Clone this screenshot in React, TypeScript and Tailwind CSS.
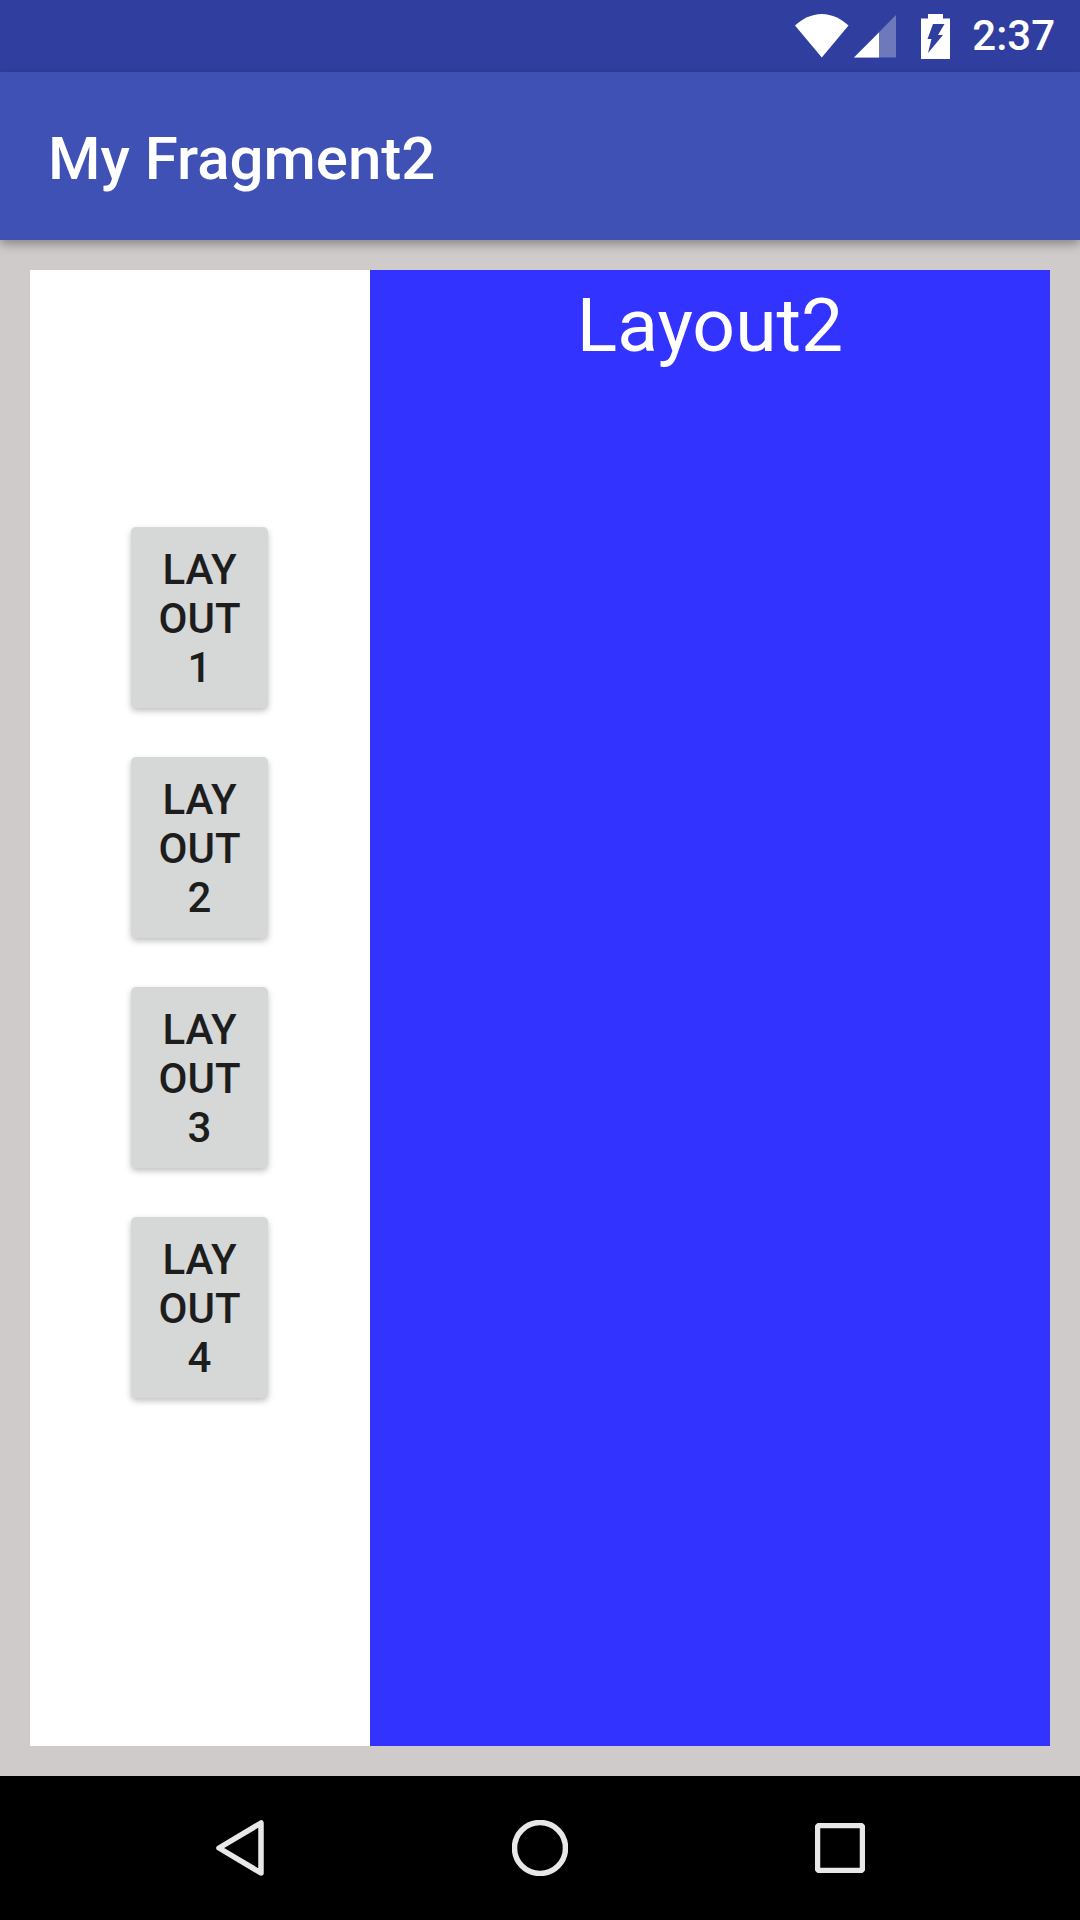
import React from 'react';

const buttons = ['1', '2', '3', '4'];

function StatusIcons() {
  return (
    <>
      <svg width="54" height="44" viewBox="0 0 54 44" className="mr-[5px]">
        <path d="M0 11.500C7 5 16.500 0 26.800 0S46.500 5 53.500 11.500L26.800 43.500Z" fill="#fff" />
      </svg>
      <svg width="43" height="44" viewBox="0 0 43 44" className="mr-[24px]">
        <path d="M0 43.500L42 1V43.500Z" fill="#fff" fillOpacity="0.3" />
        <path d="M0 43.500L25 18.500V43.500Z" fill="#fff" />
      </svg>
      <svg width="30" height="45" viewBox="0 0 30 45" className="mr-[21px]">
        <path
          fillRule="evenodd"
          d="M7 0H22V4.500H29V45H0V4.500H7ZM12 10L6.500 25H10.500L7 39L22 21H17L23.500 10Z"
          fill="#fff"
        />
      </svg>
    </>
  );
}

export default function App() {
  return (
    <div className='flex h-[1920px] w-[1080px] flex-col overflow-hidden bg-[#cfcbca] font-["Roboto",sans-serif]'>
      <div className="flex h-[72px] shrink-0 items-center justify-end bg-[#303f9f] pr-[25px]">
        <StatusIcons />
        <span className="text-[42px] font-medium leading-[72px] text-white">2:37</span>
      </div>

      <div className="relative z-10 flex h-[168px] shrink-0 items-center bg-[#3f51b5] pl-[48px] pt-[5px] shadow-[0_4px_10px_rgba(0,0,0,0.35)]">
        <h1 className="text-[60px] font-medium leading-none text-white">My Fragment2</h1>
      </div>

      <div className="flex flex-1 p-[30px]">
        <div className="flex w-[340px] shrink-0 flex-col items-center gap-[49px] bg-white pr-[1px] pt-[257px]">
          {buttons.map((n) => (
            <button
              key={n}
              className="flex h-[181px] w-[137px] flex-col items-center justify-center rounded-[5px] bg-[#d6d7d7] pt-[2px] text-[42px] font-medium leading-[49px] text-[#1d1d1d] shadow-[0_3px_6px_rgba(0,0,0,0.25)]"
            >
              <span>LAY</span>
              <span>OUT</span>
              <span>{n}</span>
            </button>
          ))}
        </div>
        <div className="flex flex-1 justify-center bg-[#3333ff]">
          <span className="text-[75px] leading-[110px] text-white">Layout2</span>
        </div>
      </div>

      <div className="flex h-[144px] shrink-0 items-center justify-between bg-black pl-[216px] pr-[215px]">
        <svg width="48" height="56" viewBox="0 0 48 56" fill="none">
          <path d="M45 3V53L3 28Z" stroke="#e8e8e8" strokeWidth="5.500" strokeLinejoin="round" />
        </svg>
        <svg width="56" height="56" viewBox="0 0 56 56" fill="none">
          <circle cx="28" cy="28" r="25.500" stroke="#e8e8e8" strokeWidth="5.500" />
        </svg>
        <svg width="50" height="50" viewBox="0 0 50 50" fill="none">
          <rect x="2.500" y="2.500" width="45" height="45" rx="2" stroke="#e8e8e8" strokeWidth="5.500" />
        </svg>
      </div>
    </div>
  );
}
